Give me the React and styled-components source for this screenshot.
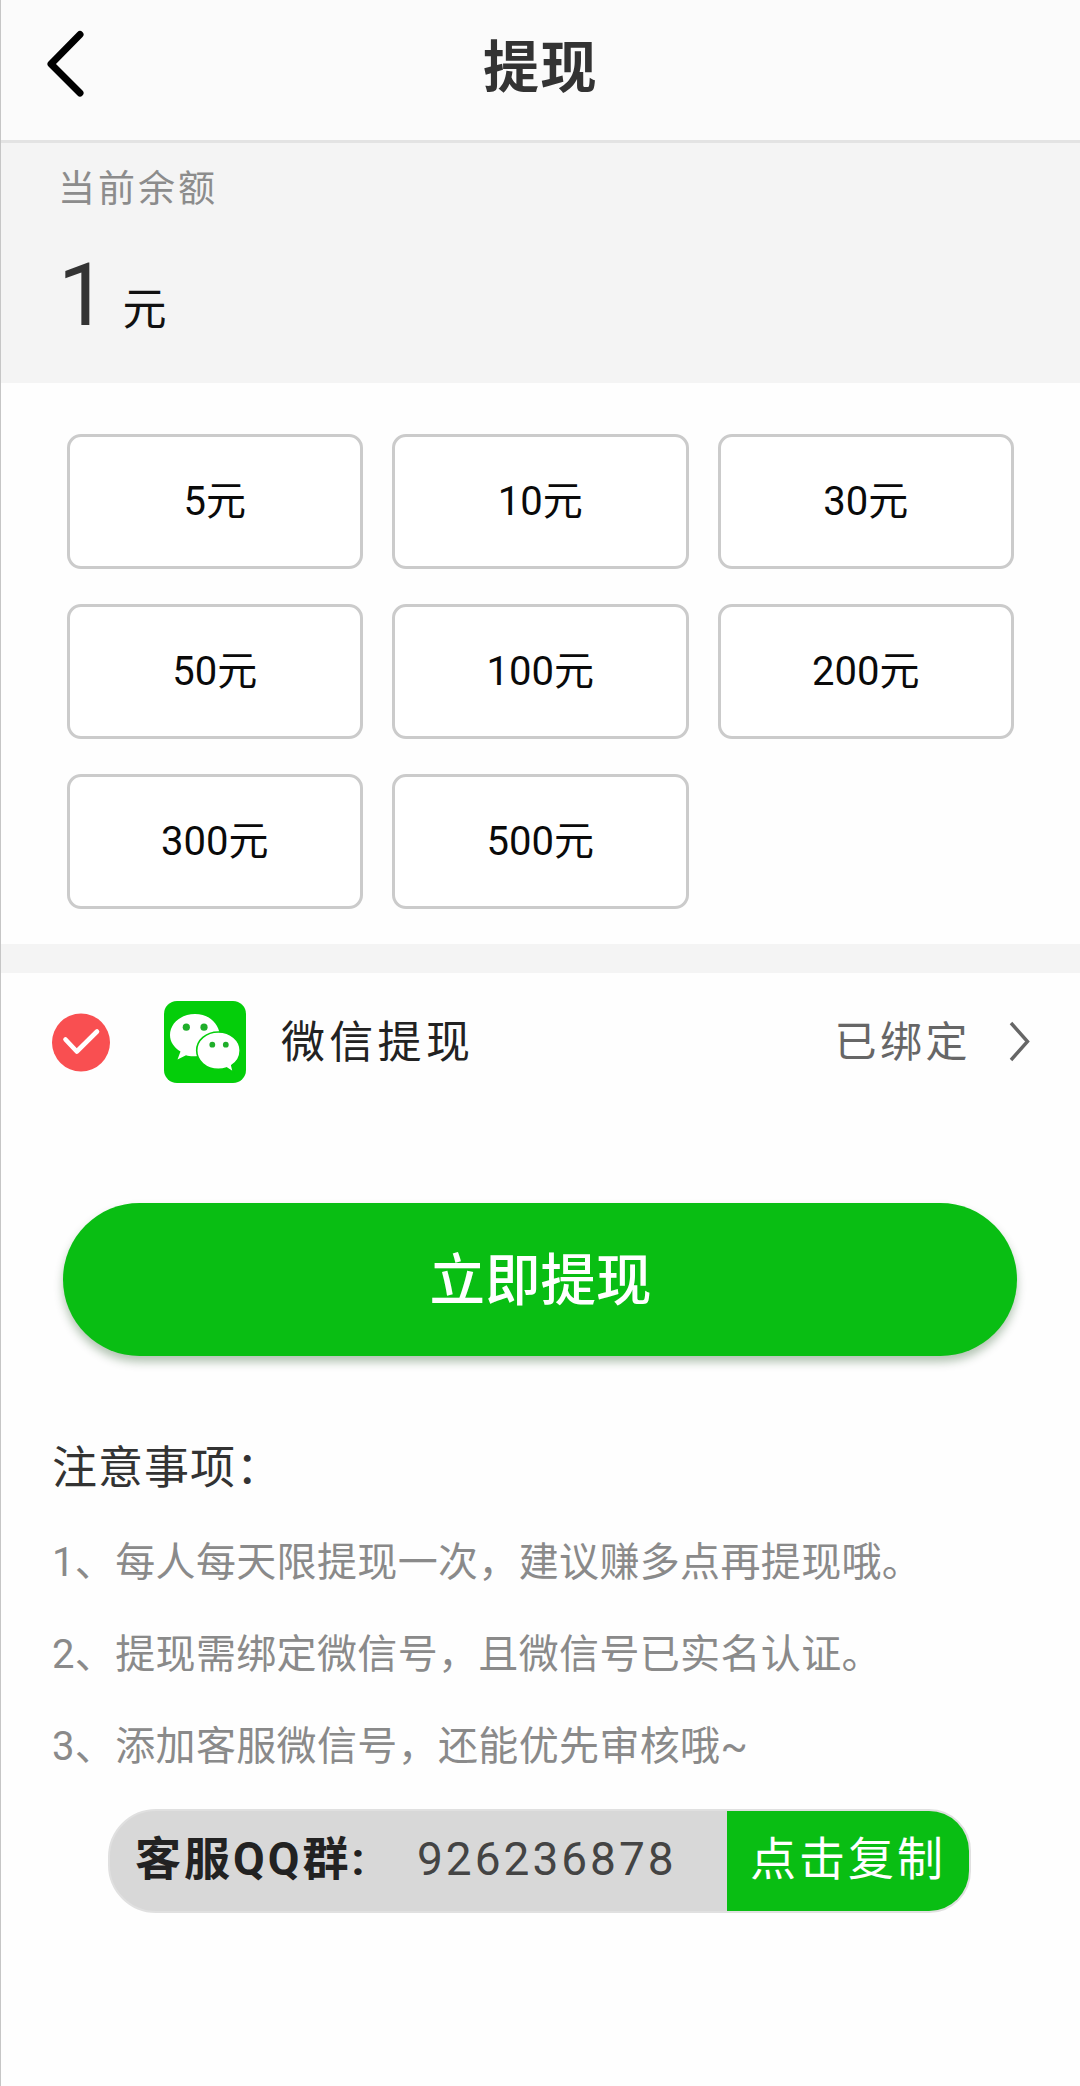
import React from 'react';
import styled, { createGlobalStyle } from 'styled-components';

const amounts = [5, 10, 30, 50, 100, 200, 300, 500];

const notes = [
  '1、每人每天限提现一次，建议赚多点再提现哦。',
  '2、提现需绑定微信号，且微信号已实名认证。',
  '3、添加客服微信号，还能优先审核哦~',
];

function App() {
  return (
    <Page lang='zh-CN'>
      <GlobalStyle />
      <Header>
        <BackIcon viewBox='0 0 40 70'>
          <path d='M36 5.500L7 35L36 64' />
        </BackIcon>
        <Title>提现</Title>
      </Header>
      <Balance>
        <BalanceLabel>当前余额</BalanceLabel>
        <BalanceValue>
          1<Unit>元</Unit>
        </BalanceValue>
      </Balance>
      <Amounts>
        {amounts.map((amount) => (
          <Amount key={amount}>{amount}元</Amount>
        ))}
      </Amounts>
      <Method>
        <CheckIcon viewBox='0 0 58 59'>
          <ellipse cx='29' cy='29.5' rx='29' ry='29' />
          <path d='M13.5 26.500L24.8 38.500L45 18.500' />
        </CheckIcon>
        <WechatIcon viewBox='0 0 82 82'>
          <rect width='82' height='82' rx='13' fill='#04ce0a' />
          <path
            fill='#fff'
            d='M31 13C17 13 6 22.400 6 34C6 40.800 10 46.500 16.500 50.600L13.500 58.500L22 54.200C25 55.100 28 55.500 34 55L56 34C54 21 44 13 31 13Z'
          />
          <path
            fill='#fff'
            stroke='#04ce0a'
            strokeWidth='1.600'
            d='M54.300 31C42 31 32.700 39.200 32.700 49.500C32.700 60 42 68.300 54.300 68.300C57.300 68.300 60 67.900 62.500 67L69.500 71.500L67.800 64.500C73 61 76.200 55.700 76.200 49.500C76.200 39.200 66.500 31 54.300 31Z'
          />
          <g fill='#1fae2a'>
            <circle cx='22.300' cy='26.200' r='3.600' />
            <circle cx='40' cy='26.200' r='3.600' />
            <circle cx='48.300' cy='43.700' r='2.900' />
            <circle cx='61.800' cy='43.700' r='2.900' />
          </g>
        </WechatIcon>
        <MethodName>微信提现</MethodName>
        <MethodStatus>已绑定</MethodStatus>
        <ArrowIcon viewBox='0 0 22 42'>
          <path d='M3 2L19.500 20.500L3 39' />
        </ArrowIcon>
      </Method>
      <Submit>立即提现</Submit>
      <NotesTitle>注意事项：</NotesTitle>
      <Notes>
        {notes.map((note) => (
          <Note key={note}>{note}</Note>
        ))}
      </Notes>
      <Contact>
        <ContactLabel>客服QQ群:</ContactLabel>
        <ContactNumber>926236878</ContactNumber>
        <CopyButton>点击复制</CopyButton>
      </Contact>
    </Page>
  )
}

export default App

const GlobalStyle = createGlobalStyle`
* {
    box-sizing: border-box;
}

body {
    margin: 0;
    background: #fefefe;
    font-family: Roboto, "Noto Sans CJK SC", sans-serif;
}

button {
    font-family: inherit;
    padding: 0;
    border: none;
}
`;

const Page = styled.main`
width: 1080px;
height: 2086px;
overflow: hidden;
border-left: 1px solid #c6c6c6;
background: #fefefe;
`;

const Header = styled.header`
display: grid;
grid-template-columns: 1fr auto 1fr;
height: 143px;
background: #fbfbfb;
border-bottom: 3px solid #e3e3e3;
`;

const BackIcon = styled.svg`
width: 40px;
height: 70px;
margin: 29px 0 0 43px;
fill: none;
stroke: #000;
stroke-width: 7px;
stroke-linecap: round;
stroke-linejoin: round;
`;

const Title = styled.h1`
grid-column: 2;
margin: 0;
font-size: 56px;
font-weight: 700;
line-height: 136px;
letter-spacing: 1.5px;
color: #333;
`;

const Balance = styled.section`
height: 240px;
padding: 27px 57px 0;
background: #f4f4f4;
`;

const BalanceLabel = styled.div`
font-size: 37px;
line-height: 40px;
letter-spacing: 3px;
color: #8c8c8c;
`;

const BalanceValue = styled.div`
margin-top: 40px;
font-size: 88px;
line-height: 90px;
color: #333;
`;

const Unit = styled.span`
margin-left: 15px;
font-size: 44px;
line-height: 44px;
color: #111;
`;

const Amounts = styled.section`
display: grid;
grid-template-columns: repeat(3, 296.5px);
grid-auto-rows: 135px;
gap: 35px 29px;
height: 561px;
padding: 51px 0 0 65.5px;
`;

const Amount = styled.button`
border: 3px solid #cbcbcb;
border-radius: 14px;
background: #fff;
font-size: 40px;
line-height: 44px;
color: #0a0a0a;
`;

const Method = styled.section`
display: flex;
align-items: center;
height: 167px;
padding: 0 50px 0 51px;
border-top: 29px solid #f4f4f4;
`;

const CheckIcon = styled.svg`
width: 58px;
height: 59px;
margin-right: 54px;

ellipse {
    fill: #f94f51;
}

path {
    fill: none;
    stroke: #fff;
    stroke-width: 4.6px;
    stroke-linecap: round;
    stroke-linejoin: round;
}
`;

const WechatIcon = styled.svg`
width: 82px;
height: 82px;
margin-right: 35px;
`;

const MethodName = styled.span`
flex: 1;
padding-top: 1px;
font-size: 44px;
line-height: 50px;
letter-spacing: 4.3px;
color: #222;
`;

const MethodStatus = styled.span`
padding-top: 1px;
font-size: 42px;
line-height: 50px;
letter-spacing: 3.5px;
color: #666;
`;

const ArrowIcon = styled.svg`
width: 22px;
height: 42px;
margin-left: 37px;
fill: none;
stroke: #666;
stroke-width: 3.4px;
`;

const Submit = styled.button`
display: block;
width: 954px;
height: 153px;
margin: 92px 0 0 62px;
padding: 5px 0 0 1px;
border-radius: 77px;
background: #09be13;
box-shadow: 0 6px 10px rgba(0, 60, 0, 0.3);
font-size: 55.5px;
font-weight: 500;
line-height: 60px;
color: #fff;
`;

const NotesTitle = styled.h2`
margin: 83px 0 0 51px;
font-size: 45px;
font-weight: 400;
line-height: 60px;
letter-spacing: 1px;
color: #333;
`;

const Notes = styled.ul`
margin: 18px 0 0;
padding: 0 0 0 51px;
list-style: none;
`;

const Note = styled.li`
font-size: 40px;
line-height: 92px;
letter-spacing: 0.35px;
color: #8a8a8a;
`;

const Contact = styled.div`
display: flex;
align-items: center;
width: 863px;
height: 104px;
margin: 16px 0 0 107px;
border: 2px solid #e0e0e0;
border-radius: 48px 42px 42px 48px;
background: #d8d8d8;
overflow: hidden;
letter-spacing: 3px;
font-size: 46px;
line-height: 60px;
`;

const ContactLabel = styled.span`
width: 283px;
padding: 0 0 4px 25px;
font-weight: 700;
color: #222;
`;

const ContactNumber = styled.span`
flex: 1;
padding: 0 0 4px 24px;
color: #444;
`;

const CopyButton = styled.button`
width: 242px;
height: 100px;
padding-bottom: 4px;
background: #09be13;
font-size: 46px;
line-height: 60px;
letter-spacing: 3px;
color: #fff;
`;
